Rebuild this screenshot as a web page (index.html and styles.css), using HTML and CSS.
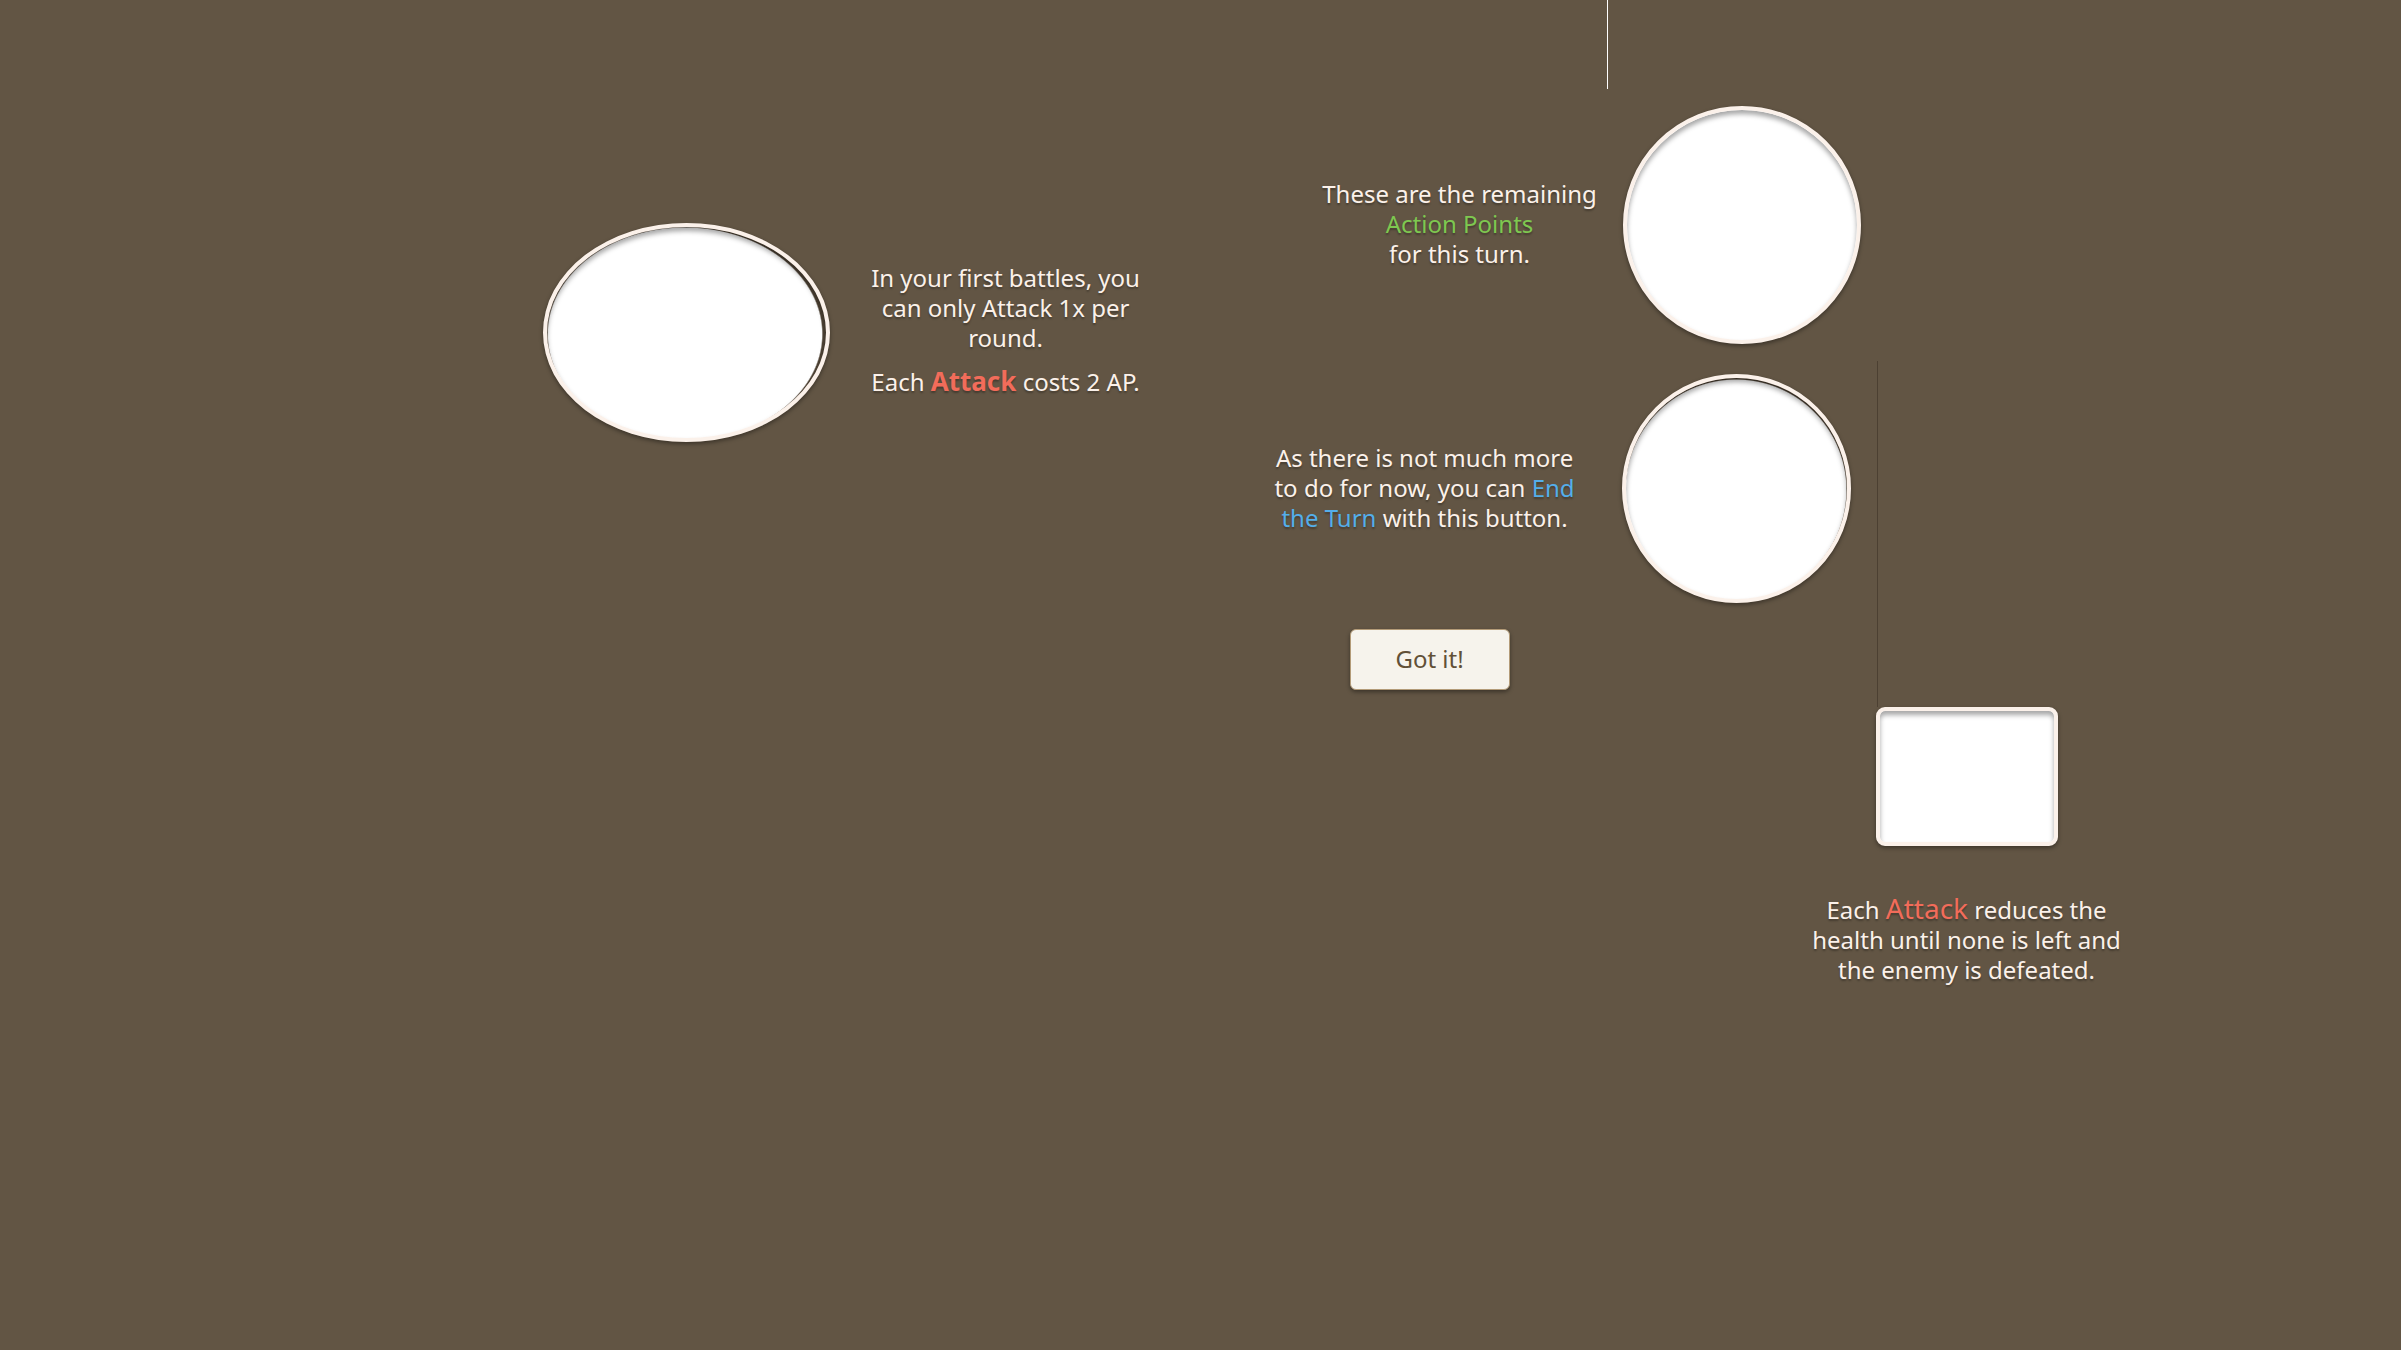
FILE: index.html
```html
<!DOCTYPE html>
<html lang="en">
<head>
<meta charset="utf-8">
<title>Battle tutorial</title>
<link rel="stylesheet" href="styles.css">
</head>
<body>
<main class="tutorial">
  <section class="hint hint-attack">
    <div class="spot spot-attack"></div>
    <div class="copy copy-attack">
      <p>In your first battles, you can only Attack 1x per round.</p>
      <p>Each <strong class="attack attack-strong">Attack</strong> costs 2 AP.</p>
    </div>
  </section>
  <div class="side">
    <section class="hint hint-points">
      <p class="copy copy-points">These are the remaining <span class="points">Action Points</span><br>for this turn.</p>
      <div class="spot spot-points"></div>
    </section>
    <section class="hint hint-turn">
      <p class="copy copy-turn">As there is not much more to do for now, you can <span class="turn">End the Turn</span> with this button.</p>
      <div class="spot spot-turn"></div>
    </section>
    <button class="confirm" type="button">Got it!</button>
    <section class="enemy">
      <div class="spot spot-enemy"></div>
      <p class="copy copy-enemy">Each <span class="attack">Attack</span> reduces the health until none is left and the enemy is defeated.</p>
    </section>
  </div>
</main>
</body>
</html>
```
FILE: styles.css
```css
* {
  box-sizing: border-box;
}

body {
  margin: 0;
  min-height: 100vh;
  background: #625544;
  color: #fbf1ea;
  font: 24px/30px "Noto Sans", sans-serif;
}

p {
  margin: 0;
}

.tutorial {
  display: grid;
  grid-template-columns: 85fr auto auto 43fr;
  align-items: start;
}

.hint {
  display: flex;
  align-items: center;
}

.hint-attack {
  grid-column: 2;
  gap: 32px;
  padding-top: 223px;
}

.side {
  grid-column: 3;
  display: flex;
  flex-direction: column;
  width: 860px;
  margin-left: 117px;
  padding-top: 106px;
}

.copy {
  padding-bottom: 2px;
  text-align: center;
  text-shadow: 0 2px 2px rgba(0, 0, 0, 0.3);
}

.copy-attack {
  display: grid;
  gap: 14px;
  width: 288px;
  padding-bottom: 6px;
}

.copy-points {
  width: 290px;
}

.copy-turn {
  width: 316px;
}

.copy-enemy {
  width: 320px;
}

.attack {
  color: #f26c5a;
  font-size: 28px;
  line-height: 1;
}

.attack-strong {
  font-size: 26px;
}

.points {
  color: #7ec850;
}

.turn {
  color: #54aeea;
}

.spot {
  position: relative;
  flex: none;
  border: 4px solid #fbf1ea;
  border-radius: 50%;
  background: #fff;
  box-shadow: 0 2px 4px rgba(0, 0, 0, 0.4), inset 0 4px 5px rgba(0, 0, 0, 0.35);
}

.spot-attack {
  width: 287px;
  height: 219px;
  background: radial-gradient(138px 107px at 138px 107px, #fff 99%, #4f4335 100%);
}

.hint-points {
  gap: 18px;
  margin-left: 48px;
}

.spot-points {
  width: 238px;
  height: 238px;
}

.spot-points::before {
  content: "";
  position: absolute;
  left: -20px;
  bottom: 251px;
  width: 1px;
  height: 89px;
  background: #fff;
}

.hint-turn {
  gap: 39px;
  margin-top: 30px;
}

.spot-turn {
  width: 229px;
  height: 229px;
  background: radial-gradient(circle 111px at 110px 112px, #fff 99%, #4f4335 100%);
}

.confirm {
  align-self: flex-start;
  width: 160px;
  height: 61px;
  margin: 26px 0 17px 83px;
  padding: 0 0 2px;
  border: 1px solid #b39b78;
  border-radius: 6px;
  background: #f6f3ec;
  box-shadow: 0 2px 4px rgba(0, 0, 0, 0.4);
  color: #615037;
  font: inherit;
}

.enemy {
  display: grid;
  justify-items: center;
  align-self: flex-end;
  gap: 48px;
}

.spot-enemy {
  width: 182px;
  height: 139px;
  border-radius: 9px;
}

.spot-enemy::before {
  content: "";
  position: absolute;
  left: -3px;
  bottom: 135px;
  width: 1px;
  height: 346px;
  background: #4c4032;
}
```
